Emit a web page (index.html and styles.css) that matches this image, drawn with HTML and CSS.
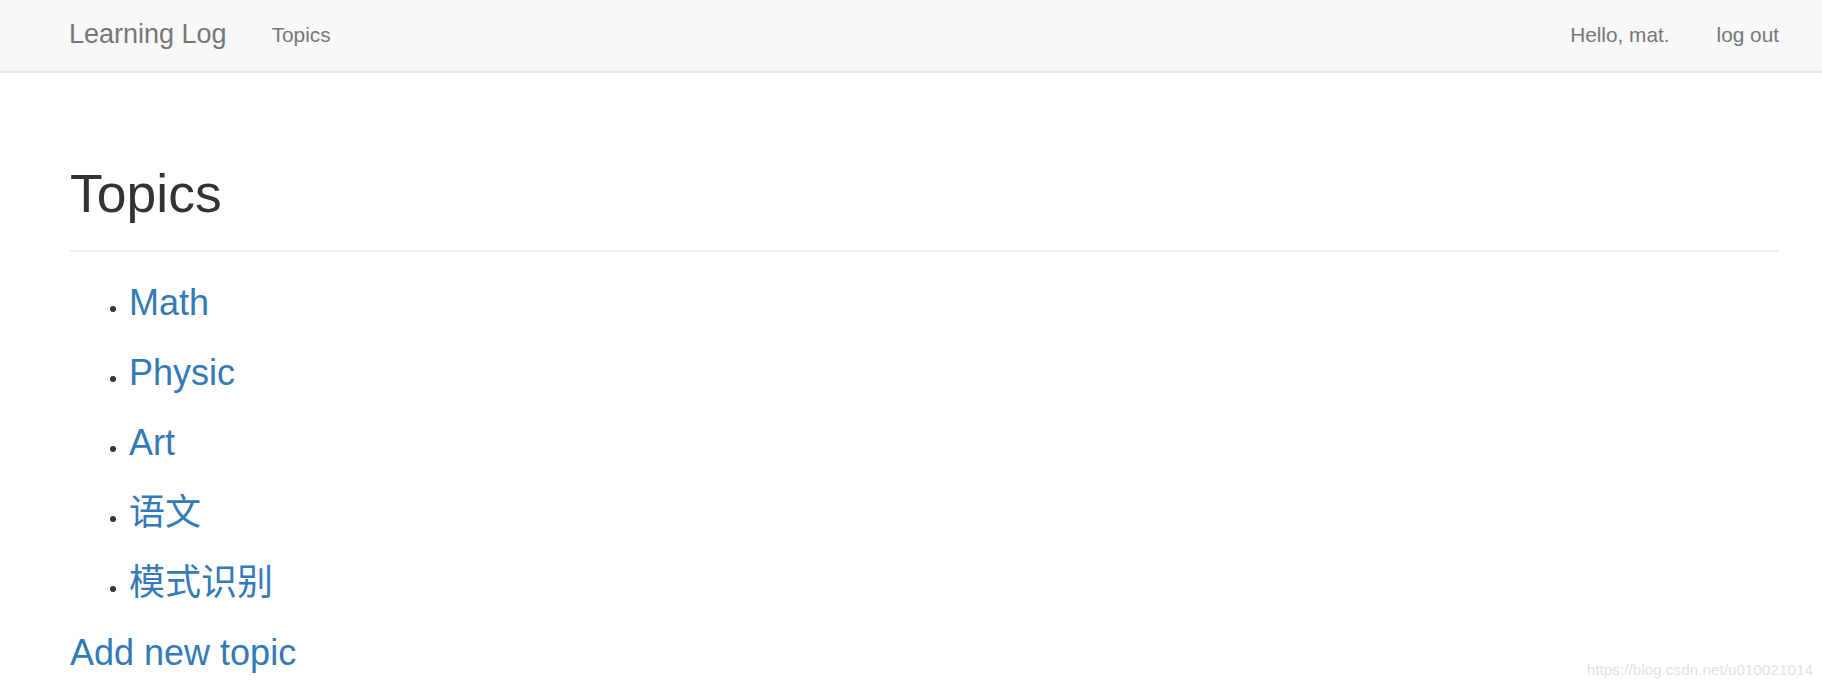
FILE: index.html
```html
<!DOCTYPE html>
<html lang="en">
<head>
<meta charset="utf-8">
<title>Learning Log</title>
<link rel="stylesheet" href="styles.css">
</head>
<body>
<nav class="navbar">
  <div class="nav-inner">
    <div class="nav-left">
      <a class="brand" href="#">Learning Log</a>
      <a class="nav-link" href="#">Topics</a>
    </div>
    <div class="nav-right">
      <span class="nav-link">Hello, mat.</span>
      <a class="nav-link" href="#">log out</a>
    </div>
  </div>
</nav>
<main class="container">
  <div class="page-header">
    <h1>Topics</h1>
  </div>
  <ul class="topics">
    <li><a href="#">Math</a></li>
    <li><a href="#">Physic</a></li>
    <li><a href="#">Art</a></li>
    <li><a href="#">语文</a></li>
    <li><a href="#">模式识别</a></li>
  </ul>
  <a class="add-link" href="#">Add new topic</a>
</main>
<div class="watermark">https://blog.csdn.net/u010021014</div>
</body>
</html>
```
FILE: styles.css
```css
html, body {
  margin: 0;
  padding: 0;
}
body {
  font-family: "Liberation Sans", Arial, "Noto Sans CJK SC", sans-serif;
  color: #333;
  background: #fff;
  position: relative;
  height: 689px;
  overflow: hidden;
}
a {
  text-decoration: none;
}
.navbar {
  height: 71px;
  background: #f8f8f8;
  border-bottom: 2px solid #e7e7e7;
}
.nav-inner {
  height: 100%;
  display: flex;
  justify-content: space-between;
  align-items: flex-start;
  padding: 0 43px 0 69px;
}
.nav-left {
  display: flex;
  align-items: flex-start;
  gap: 45px;
}
.nav-right {
  display: flex;
  align-items: flex-start;
  gap: 47px;
}
.brand {
  font-size: 27px;
  line-height: 27px;
  margin-top: 21px;
  color: #777;
}
.nav-link {
  font-size: 20.8px;
  line-height: 20.8px;
  margin-top: 25px;
  color: #777;
}
.container {
  padding: 0 43px 0 70px;
}
.page-header {
  padding: 92px 0 27px;
  border-bottom: 2px solid #eee;
}
.page-header h1 {
  margin: 0;
  font-size: 53.5px;
  line-height: 58px;
  font-weight: 400;
  color: #333;
}
.topics {
  list-style: none;
  margin: 0;
  padding: 16px 0 0 40px;
}
.topics li {
  font-size: 36px;
  line-height: 70px;
}
.topics li::before {
  content: "";
  display: inline-block;
  width: 6px;
  height: 6px;
  border-radius: 50%;
  background: #333;
  margin: 0 13px 3px 0;
  vertical-align: baseline;
}
.topics a,
.add-link {
  color: #337ab7;
}
.add-link {
  display: block;
  font-size: 36px;
  line-height: 70px;
  width: max-content;
}
.watermark {
  position: absolute;
  right: 9px;
  top: 662px;
  font-size: 15.3px;
  line-height: 15.3px;
  color: #e2e2e2;
}
```
